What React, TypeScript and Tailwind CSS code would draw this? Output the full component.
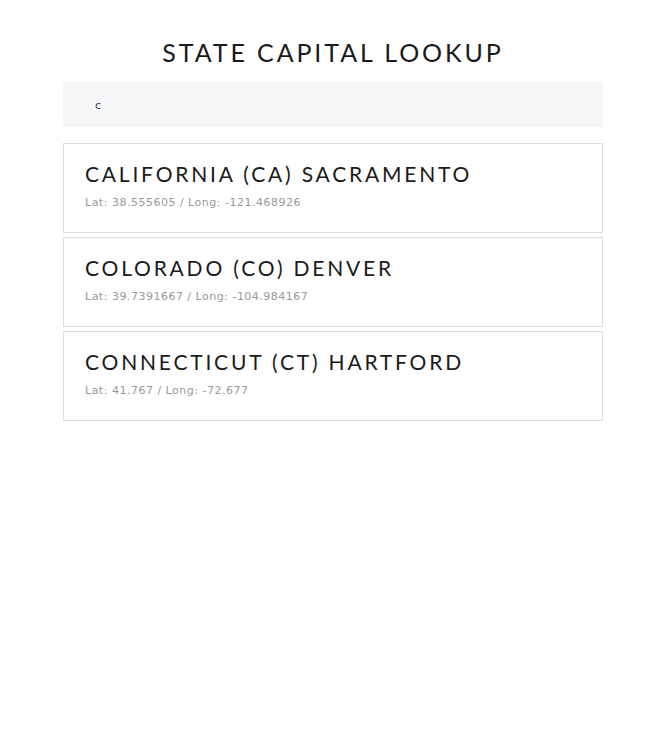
const capitals = [
  { name: "California", abbr: "CA", capital: "Sacramento", lat: "38.555605", long: "-121.468926" },
  { name: "Colorado", abbr: "CO", capital: "Denver", lat: "39.7391667", long: "-104.984167" },
  { name: "Connecticut", abbr: "CT", capital: "Hartford", lat: "41.767", long: "-72.677" },
]

const App = () => {
  return (
    <div className="min-h-screen bg-white font-['Lato','Open_Sans',sans-serif]">
      <div className="w-[540px] ml-[63px] pt-[36px]">
        <h1 className="text-center text-[25px] leading-[32px] tracking-[2.9px] text-[#1a1a1a] uppercase">
          State Capital Lookup
        </h1>
        <div className="mt-[14px] h-[45px] bg-[#f5f6f8] flex items-center pl-[32px] pt-[3px]">
          <span className="text-[11px] text-[#3b3f55] font-['DejaVu_Sans',sans-serif]">c</span>
        </div>
        <div className="mt-[16px] flex flex-col gap-[4px]">
          {capitals.map((c) => (
            <div key={c.abbr} className="h-[90px] border border-[#dddddd] px-[21px] pt-[16px]">
              <p className="text-[21px] leading-[28px] tracking-[2.8px] text-[#1a1a1a] uppercase">
                {c.name} ({c.abbr}) {c.capital}
              </p>
              <p className="mt-[7px] text-[11px] leading-[16px] tracking-[0.5px] text-[#999999] font-['DejaVu_Sans',sans-serif]">
                Lat: {c.lat} / Long: {c.long}
              </p>
            </div>
          ))}
        </div>
      </div>
    </div>
  )
}

export default App
